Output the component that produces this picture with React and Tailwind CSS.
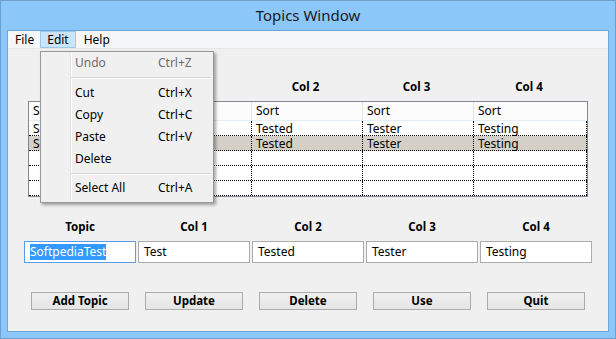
import React from "react";

const cols = ["Topic", "Col 1", "Col 2", "Col 3", "Col 4"];
const colW = ["w-[111px]", "w-[111px]", "w-[111px]", "w-[111px]", "w-[114px]"];
const rowData = [
  ["SoftpediaTest", "Test", "Tested", "Tester", "Testing"],
  ["SoftpediaTest", "Test", "Tested", "Tester", "Testing"],
  ["", "", "", "", ""],
  ["", "", "", "", ""],
  ["", "", "", "", ""],
];
const inputVals = ["SoftpediaTest", "Test", "Tested", "Tester", "Testing"];
const buttons = ["Add Topic", "Update", "Delete", "Use", "Quit"];

function MenuItem({ label, shortcut, disabled }) {
  return (
    <div className={`flex items-center h-[22px] pl-[34px] ${disabled ? "text-[#6d6d6d]" : "text-black"}`}>
      <span className="w-[83px]">{label}</span>
      <span>{shortcut}</span>
    </div>
  );
}

function Sep({ h }) {
  return (
    <div className={`flex items-center ${h} pl-[30px] pr-[2px]`}>
      <div className="w-full border-t border-[#d7d7d7] border-b border-b-white" />
    </div>
  );
}

export default function App() {
  const font = { fontFamily: '"Noto Sans", "Open Sans", sans-serif' };
  return (
    <div
      className="relative w-[616px] h-[339px] bg-[#8cc7f9] border border-[#6f9fcd] flex flex-col text-[12px] leading-[14px] text-black overflow-hidden"
      style={font}
    >
      {/* Title bar */}
      <div className="h-[29px] flex items-center justify-center text-[15px] text-[#1a1a1a] pb-[1px]">
        Topics Window
      </div>

      {/* Client area */}
      <div className="mx-[6px] mb-[6px] flex-1 border border-[#6aa4d8] bg-[#f0f0f0] flex flex-col">
        {/* Menu bar */}
        <div className="h-[18px] bg-[#f5f6f7] border-b border-[#e6e6e6] flex items-stretch pl-[1px]">
          <div className="px-[6px] flex items-center">File</div>
          <div className="px-[6px] flex items-center bg-[#cce4f7] border border-[#99c9ef]">Edit</div>
          <div className="px-[8px] flex items-center">Help</div>
        </div>

        {/* Top table area */}
        <div className="pl-[20px] pt-[31px]">
          <div className="flex font-bold text-[11.5px]">
            {cols.map((c, i) => (
              <div key={c} className={`${colW[i]} text-center h-[14px]`}>
                {c}
              </div>
            ))}
          </div>
          <div className="mt-[7px] w-[560px] border border-[#828790] bg-white">
            <div className="flex h-[19px] bg-[#fcfcfc] border-b border-[#e3eefb]">
              {cols.map((c, i) => (
                <div
                  key={i}
                  className={`${colW[i]} pl-[4px] flex items-center ${i > 0 ? "border-l border-[#e5e5e5]" : ""}`}
                >
                  Sort
                </div>
              ))}
            </div>
            {rowData.map((r, ri) => (
              <div
                key={ri}
                className={`flex h-[15px] border-b border-dotted border-black ${ri === 1 ? "bg-[#d4d0c8]" : ""}`}
              >
                {r.map((v, i) => (
                  <div
                    key={i}
                    className={`${colW[i]} pl-[4px] flex items-center leading-[13px] ${
                      i > 0 ? "border-l border-dotted border-black" : ""
                    } ${i === 4 ? "border-r border-dotted border-black" : ""}`}
                  >
                    {v}
                  </div>
                ))}
              </div>
            ))}
          </div>
        </div>

        {/* Bottom form */}
        <div className="pl-[16px] pt-[23px] grid grid-cols-[112px_112px_112px_112px_112px] gap-x-[2px]">
          {cols.map((c, i) => (
            <div key={c} className="flex flex-col items-center">
              <div className="font-bold text-[11.5px] h-[14px]">{c}</div>
              <div
                className={`mt-[7px] w-full h-[22px] bg-white border flex items-center pl-[5px] ${
                  i === 0 ? "border-[#569de5]" : "border-[#acacac]"
                }`}
              >
                {i === 0 ? (
                  <span className="bg-[#3399ff] text-white leading-[16px]">{inputVals[i]}</span>
                ) : (
                  <span>{inputVals[i]}</span>
                )}
              </div>
              <div className="mt-[29px] w-[98px] h-[18px] border border-[#acacac] bg-gradient-to-b from-[#f0f0f0] to-[#e5e5e5] flex items-center justify-center font-bold text-[11.5px]">
                {buttons[i]}
              </div>
            </div>
          ))}
        </div>
      </div>

      {/* Dropdown menu */}
      <div className="absolute left-[39px] top-[50px] w-[174px] h-[152px] bg-[#f0f0f0] border border-[#979797] shadow-[2px_2px_3px_rgba(0,0,0,0.35)]">
        <div className="absolute left-[29px] top-[2px] bottom-[2px] border-l border-[#e2e3e3] border-r border-r-white" />
        <div className="relative flex flex-col">
          <MenuItem label="Undo" shortcut="Ctrl+Z" disabled />
          <Sep h="h-[8px]" />
          <MenuItem label="Cut" shortcut="Ctrl+X" />
          <MenuItem label="Copy" shortcut="Ctrl+C" />
          <MenuItem label="Paste" shortcut="Ctrl+V" />
          <MenuItem label="Delete" shortcut="" />
          <Sep h="h-[7px]" />
          <MenuItem label="Select All" shortcut="Ctrl+A" />
        </div>
      </div>
    </div>
  );
}
